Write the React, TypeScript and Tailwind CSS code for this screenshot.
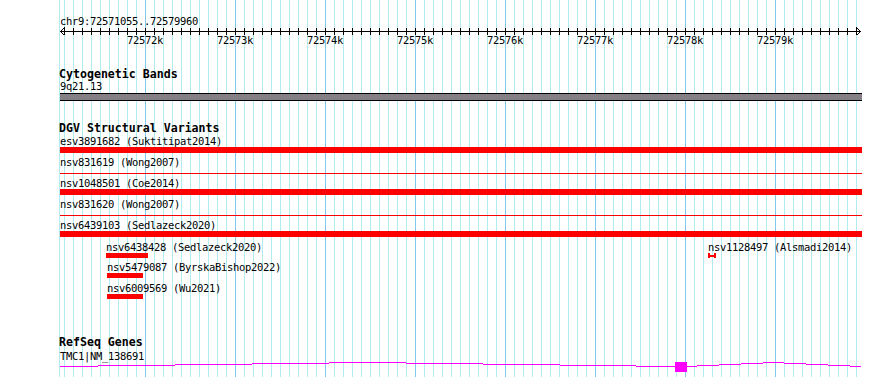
import React from 'react';

const START = 72571055;
const END = 72579960;
// 90px per kb, 72572k sits at x=145
const px = (pos: number) => 145 + (pos - 72572000) * 0.09;

const MINOR = Array.from({ length: 89 }, (_, i) => 72571100 + i * 100);
const MAJOR = [72572, 72573, 72574, 72575, 72576, 72577, 72578, 72579];

type Variant = { label: string; bar: 'thick' | 'thin' };

const ROWS: Variant[] = [
  { label: 'esv3891682 (Suktitipat2014)', bar: 'thick' },
  { label: 'nsv831619 (Wong2007)', bar: 'thin' },
  { label: 'nsv1048501 (Coe2014)', bar: 'thick' },
  { label: 'nsv831620 (Wong2007)', bar: 'thin' },
  { label: 'nsv6439103 (Sedlazeck2020)', bar: 'thick' },
];

// intron line drawn as little steps, [x1, x2, y]
const INTRON: [number, number, number][] = [
  [60, 98, 366], [98, 175, 365], [175, 252, 364], [252, 329, 363], [329, 406, 362],
  [406, 483, 363], [483, 560, 364], [560, 636, 365], [636, 675, 366],
  [687, 697, 366], [697, 719, 365], [719, 741, 364], [741, 763, 363], [763, 784, 362],
  [784, 806, 363], [806, 828, 364], [828, 850, 365], [850, 861, 366],
];

function Grid() {
  return (
    <svg className="absolute inset-0" width={890} height={377} shapeRendering="crispEdges">
      <rect x={59} y={0} width={1} height={377} fill="#b0ecf0" />
      {MINOR.map((p) => {
        const major = p % 1000 === 0;
        return (
          <rect
            key={p}
            x={Math.round(px(p))}
            y={0}
            width={1}
            height={377}
            fill={major ? '#80c8ec' : '#b0ecf0'}
          />
        );
      })}
    </svg>
  );
}

function Ruler() {
  return (
    <div className="relative h-[20px]">
      <svg className="absolute inset-0" width={890} height={20} shapeRendering="crispEdges">
        <rect x={60} y={5} width={801} height={1} fill="#000" />
        {MINOR.map((p) => (
          <rect key={p} x={Math.round(px(p))} y={2} width={1} height={7} fill="#000" />
        ))}
        <path d="M64.5 1.5 L60.5 5.5 L64.5 9.5" stroke="#000" fill="none" />
        <path d="M856.5 1.5 L860.5 5.5 L856.5 9.5" stroke="#000" fill="none" />
      </svg>
      {MAJOR.map((k) => (
        <span
          key={k}
          className="absolute top-[9px] w-[60px] -ml-[30px] text-center leading-[10px]"
          style={{ left: px(k * 1000) }}
        >
          {k}k
        </span>
      ))}
    </div>
  );
}

function TrackTitle({ children }: { children: React.ReactNode }) {
  return (
    <div className="h-[12px] pl-[59px] text-[11.6px] font-bold leading-[12px] tracking-normal">{children}</div>
  );
}

export default function App() {
  return (
    <div
      className="relative h-[377px] w-[890px] overflow-hidden bg-white text-[10.5px] tracking-[-0.32px] text-black"
      style={{ fontFamily: '"DejaVu Sans Mono", "Liberation Mono", monospace' }}
    >
      <Grid />
      <div className="relative flex flex-col">
        <div className="mt-[16px] h-[10px] pl-[60px] leading-[10px]">
          chr9:{START}..{END}
        </div>
        <Ruler />

        <div className="mt-[22px]">
          <TrackTitle>Cytogenetic Bands</TrackTitle>
        </div>
        <div className="mt-[1px] h-[10px] pl-[60px] leading-[10px]">9q21.13</div>
        <div className="ml-[60px] mt-[2px] h-[8px] w-[802px] border-y border-black bg-[#858085]" />

        <div className="mt-[21px]">
          <TrackTitle>DGV Structural Variants</TrackTitle>
        </div>
        <div className="mt-[2px] flex flex-col">
          {ROWS.map((r) => (
            <div key={r.label} className="h-[21px] pl-[60px]">
              <div className="h-[10px] leading-[10px]">{r.label}</div>
              {r.bar === 'thick' ? (
                <div className="mt-[1px] h-[6px] w-[802px] bg-[#ff0000]" />
              ) : (
                <div className="mt-[6px] h-[1px] w-[802px] bg-[#ff0000]" />
              )}
            </div>
          ))}
        </div>

        <div className="relative h-[21px]">
          <div className="absolute left-[106px] top-[1px] leading-[10px]">nsv6438428 (Sedlazeck2020)</div>
          <div className="absolute left-[106px] top-[12px] h-[5px] w-[42px] bg-[#ff0000]" />
          <div className="absolute left-[708px] top-[1px] leading-[10px]">nsv1128497 (Alsmadi2014)</div>
          <div className="absolute left-[708px] top-[12px] flex h-[5px] w-[8px] items-center">
            <div className="h-[5px] w-[2px] bg-[#ff0000]" />
            <div className="h-[2px] flex-1 bg-[#ff0000]" />
            <div className="h-[5px] w-[2px] bg-[#ff0000]" />
          </div>
        </div>
        <div className="h-[21px] pl-[107px]">
          <div className="h-[11px] leading-[10px]">nsv5479087 (ByrskaBishop2022)</div>
          <div className="h-[5px] w-[36px] bg-[#ff0000]" />
        </div>
        <div className="h-[21px] pl-[107px]">
          <div className="h-[11px] leading-[10px]">nsv6009569 (Wu2021)</div>
          <div className="h-[5px] w-[36px] bg-[#ff0000]" />
        </div>

        <div className="mt-[32px]">
          <TrackTitle>RefSeq Genes</TrackTitle>
        </div>
        <div className="mt-[3px] h-[10px] pl-[60px] leading-[10px]">TMC1|NM_138691</div>
      </div>

      <svg className="absolute left-0 top-0" width={890} height={377} shapeRendering="crispEdges">
        {INTRON.map(([a, b, y]) => (
          <rect key={a} x={a} y={y} width={b - a} height={1} fill="#ff00ff" />
        ))}
        <rect x={675} y={362} width={12} height={10} fill="#ff00ff" />
      </svg>
    </div>
  );
}
